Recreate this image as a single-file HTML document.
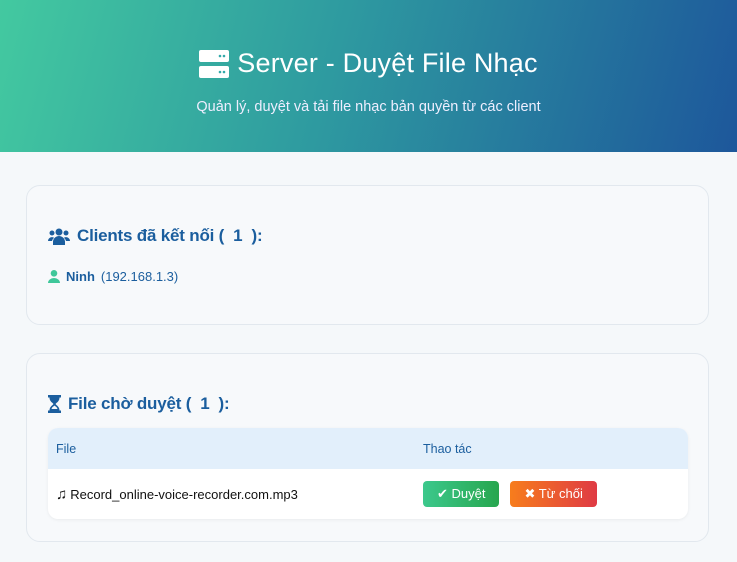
<!DOCTYPE html>
<html><head><meta charset="utf-8">
<style>
*{box-sizing:border-box;margin:0;padding:0}
body{width:737px;height:562px;overflow:hidden;background:#f5f8fa;font-family:"Liberation Sans","DejaVu Sans",sans-serif}
.hdr{height:152px;background:linear-gradient(105deg,#43c9a0 0%,#2e9aa0 45%,#1d579b 100%);color:#fff;text-align:center;position:relative}
.hdr h1{position:absolute;top:48px;left:0;right:0;font-weight:normal;font-size:27px;letter-spacing:0.2px;display:flex;justify-content:center;align-items:center;gap:8px}
.hdr p{position:absolute;top:99px;left:0;right:0;font-size:14.5px;color:#eef}
.card{position:absolute;left:26px;width:683px;border:1px solid #e2e8ee;border-radius:14px;background:#f7f9fb}
.c1{top:185px;height:140px}
.c2{top:353px;height:189px}
h2{position:absolute;left:21px;font-size:17px;font-weight:bold;color:#1b5e9e;display:flex;align-items:center;gap:7px;white-space:pre;letter-spacing:-0.2px}
.cl{position:absolute;left:21px;top:83px;font-size:13px;font-weight:bold;color:#1b5e9e;display:flex;align-items:center;gap:6px}
.cl span{font-weight:normal}
table{position:absolute;left:21px;top:74px;width:640px;border-collapse:collapse;border-radius:10px;overflow:hidden;background:#fff;box-shadow:0 1px 3px rgba(0,0,0,.06)}
th{background:#e2effb;color:#1b5e9e;font-size:12.5px;font-weight:normal;text-align:left;height:41px;padding-left:8px}
td{height:50px;padding-left:8px;font-size:13px;color:#111}
.btn{display:inline-block;color:#fff;font-size:13px;border-radius:4px;height:26px;line-height:26px;padding:0 14px;margin-right:11px}
.ok{background:linear-gradient(90deg,#3cc88c,#27a64e)}
.no{background:linear-gradient(90deg,#f77d1c,#df3a44)}
.note{font-weight:bold;font-size:15px;margin-right:3px}
</style></head><body>
<div class="hdr">
<h1><svg width="30" height="28" viewBox="0 0 30 28"><rect x="0" y="0" width="30" height="12" rx="2" fill="#fff"/><rect x="0" y="16" width="30" height="12" rx="2" fill="#fff"/><circle cx="21" cy="6" r="1.3" fill="#3aa"/><circle cx="25" cy="6" r="1.3" fill="#3aa"/><circle cx="21" cy="22" r="1.3" fill="#3aa"/><circle cx="25" cy="22" r="1.3" fill="#3aa"/></svg>Server - Duyệt File Nhạc</h1>
<p>Quản lý, duyệt và tải file nhạc bản quyền từ các client</p>
</div>
<div class="card c1">
<h2 style="top:40px"><svg width="22" height="17" viewBox="0 0 22 17" fill="#1b5e9e"><circle cx="11" cy="4" r="3.5"/><circle cx="4" cy="5" r="2.5"/><circle cx="18" cy="5" r="2.5"/><path d="M5 17v-3a6 6 0 0 1 12 0v3z"/><path d="M0 13a4 4 0 0 1 6-3.3A7 7 0 0 0 4 13z"/><path d="M22 13a4 4 0 0 0-6-3.3A7 7 0 0 1 18 13z"/></svg>Clients đã kết nối (  1  ):</h2>
<div class="cl"><svg width="12" height="13" viewBox="0 0 12 13" fill="#3fc79a"><circle cx="6" cy="3.3" r="3.3"/><path d="M0 13a6 5 0 0 1 12 0z"/></svg>Ninh <span>(192.168.1.3)</span></div>
</div>
<div class="card c2">
<h2 style="top:40px"><svg width="13" height="18" viewBox="0 0 13 18" fill="#1b5e9e"><rect x="0" y="0" width="13" height="2.5"/><rect x="0" y="15.5" width="13" height="2.5"/><path d="M1.5 2.5h10c0 4-3 5-4 6.5 1 1.5 4 2.5 4 6.5h-10c0-4 3-5 4-6.5-1-1.5-4-2.5-4-6.5zM3.5 14h6c-0.5-2-2-2.5-3-3.5-1 1-2.5 1.5-3 3.5z"/></svg>File chờ duyệt (  1  ):</h2>
<table><tr><th style="width:367px">File</th><th>Thao tác</th></tr>
<tr><td><span class="note">♫</span>Record_online-voice-recorder.com.mp3</td><td><span class="btn ok">✔ Duyệt</span><span class="btn no">✖ Từ chối</span></td></tr></table>
</div>
</body></html>
